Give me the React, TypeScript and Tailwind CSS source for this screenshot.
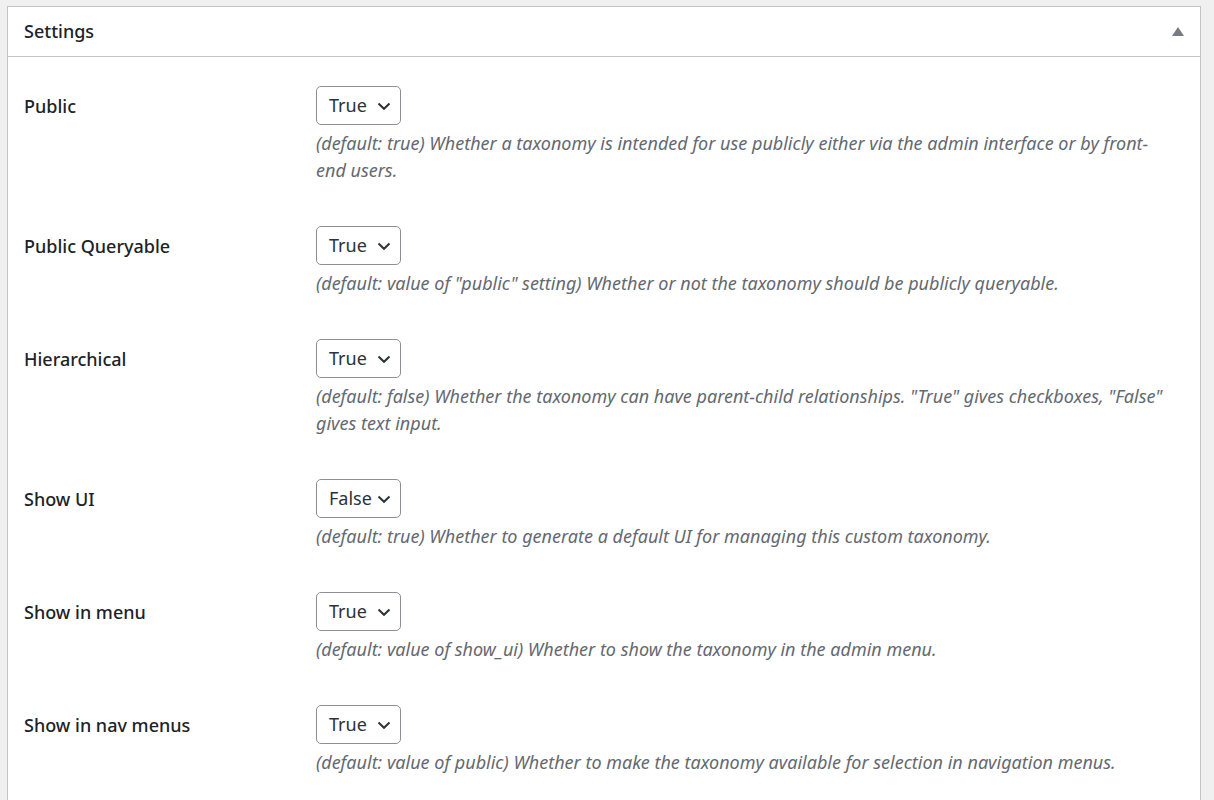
import React from 'react';

type Row = {
  label: string;
  value: string;
  lines: string[];
};

const rows: Row[] = [
  {
    label: 'Public',
    value: 'True',
    lines: [
      '(default: true) Whether a taxonomy is intended for use publicly either via the admin interface or by front-',
      'end users.',
    ],
  },
  {
    label: 'Public Queryable',
    value: 'True',
    lines: ['(default: value of "public" setting) Whether or not the taxonomy should be publicly queryable.'],
  },
  {
    label: 'Hierarchical',
    value: 'True',
    lines: [
      '(default: false) Whether the taxonomy can have parent-child relationships. "True" gives checkboxes, "False"',
      'gives text input.',
    ],
  },
  {
    label: 'Show UI',
    value: 'False',
    lines: ['(default: true) Whether to generate a default UI for managing this custom taxonomy.'],
  },
  {
    label: 'Show in menu',
    value: 'True',
    lines: ['(default: value of show_ui) Whether to show the taxonomy in the admin menu.'],
  },
  {
    label: 'Show in nav menus',
    value: 'True',
    lines: ['(default: value of public) Whether to make the taxonomy available for selection in navigation menus.'],
  },
];

const Select: React.FC<{ value: string }> = ({ value }) => (
  <div className="w-[85px] h-[39px] border border-[#8c8f94] rounded-[5px] bg-white flex items-center justify-between pl-[12px] pr-[9px] text-[18px] text-[#2c3338]">
    <span>{value}</span>
    <svg width="14" height="9" viewBox="0 0 14 9" className="mt-[1px] shrink-0">
      <polyline points="1.5,1.5 7,6.8 12.5,1.5" fill="none" stroke="#2c3338" strokeWidth="2" />
    </svg>
  </div>
);

export default function App() {
  return (
    <div className="min-h-screen bg-[#f0f0f1] pt-[6px] pl-[7px] pr-[13px] font-['Noto_Sans',sans-serif]">
      <div className="bg-white border border-[#c3c4c7]">
        {/* header */}
        <div className="h-[50px] border-b border-[#c3c4c7] flex items-center justify-between pl-[16px] pr-[16px]">
          <h2 className="text-[18px] font-medium text-[#1d2327]">Settings</h2>
          <svg width="12" height="9" viewBox="0 0 12 9">
            <polygon points="6,0 12,9 0,9" fill="#787c82" />
          </svg>
        </div>

        <div className="pt-[9px] pl-[16px] pr-[16px] pb-[12px]">
          {rows.map((row) => (
            <div key={row.label} className="grid grid-cols-[292px_1fr] pt-[20px] pb-[22px]">
              <div className="h-[40px] flex items-center text-[18px] font-medium text-[#1d2327]">{row.label}</div>
              <div>
                <Select value={row.value} />
                <p className="mt-[5px] text-[18px] leading-[27px] italic text-[#646970] whitespace-nowrap">
                  {row.lines.map((l) => (
                    <span key={l} className="block">
                      {l}
                    </span>
                  ))}
                </p>
              </div>
            </div>
          ))}
        </div>
      </div>
    </div>
  );
}
